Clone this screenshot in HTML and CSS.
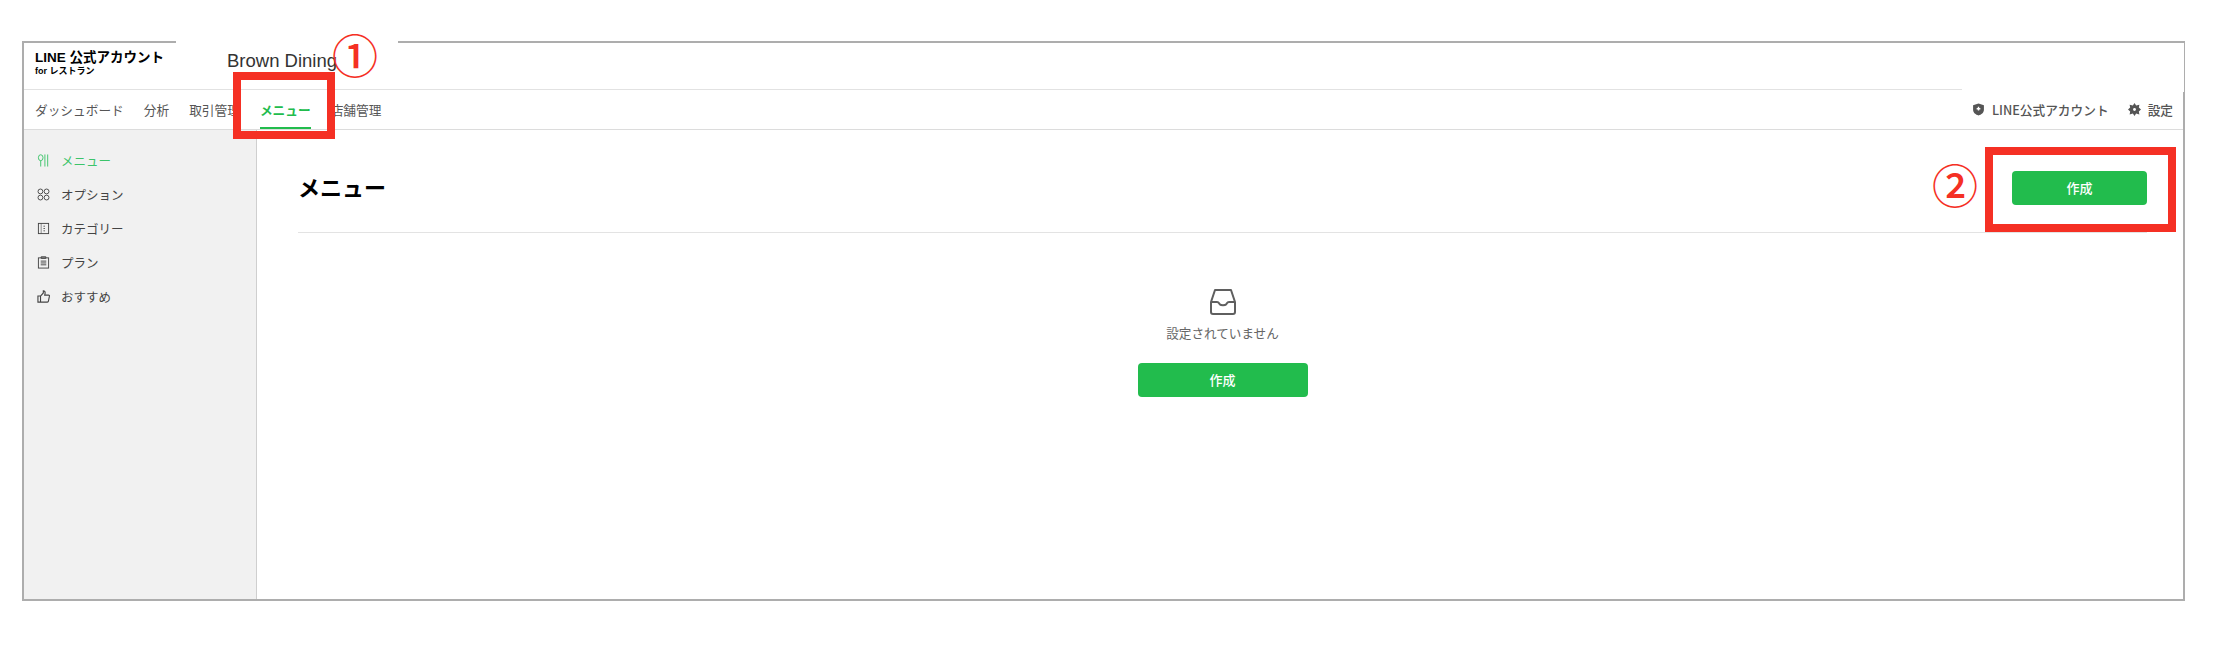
FILE: index.html
```html
<!DOCTYPE html>
<html lang="ja">
<head>
    <meta charset="UTF-8">
    <meta name="viewport" content="width=device-width, initial-scale=1.0">
    <title>メニュー</title>
    <link rel="stylesheet" href="styles.css">
</head>
<body>
    <div class="frame">
        <header class="top">
            <div class="logo">
                <div class="logo-main">LINE 公式アカウント</div>
                <div class="logo-sub">for レストラン</div>
            </div>
        </header>
        <div class="top-line"></div>
        <nav class="nav">
            <a class="nav-item">ダッシュボード</a>
            <a class="nav-item">分析</a>
            <a class="nav-item">取引管理</a>
            <a class="nav-item active">メニュー</a>
            <a class="nav-item">店舗管理</a>
            <div class="nav-right">
                <a class="nav-link">
                    <svg class="nav-icon" viewBox="0 0 12 12"><path d="M6 .5 11 2v4.200c0 2.800-2.400 4.500-5 5.300C3.400 10.700 1 9 1 6.200V2z" fill="#555"/><path d="M6 3.500v3.500M4.300 5.300h3.400" stroke="#fff" stroke-width="1.300"/></svg>
                    LINE公式アカウント
                </a>
                <a class="nav-link">
                    <svg class="nav-icon" viewBox="0 0 12 12"><path d="M6 0l1.500 2.200L10.500 1.500 10 4.200 12 6 10 7.800l.5 2.700-3-.7L6 12l-1.500-2.200-3 .7L2 7.800 0 6l2-1.800-.5-2.700 3 .7z" fill="#555"/><circle cx="6" cy="6" r="1.300" fill="#fff"/></svg>
                    設定
                </a>
            </div>
        </nav>
        <div class="content">
            <aside class="sidebar">
                <a class="side-item active">
                    <svg class="side-icon" viewBox="0 0 14 14" fill="none" stroke="currentColor"><ellipse cx="4" cy="4" rx="2.500" ry="3.200"/><path d="M4 7.200V13.500M8.500.5v13M11.500.5v13"/></svg>
                    メニュー
                </a>
                <a class="side-item">
                    <svg class="side-icon" viewBox="0 0 14 14" fill="none" stroke="currentColor"><circle cx="3.700" cy="3.700" r="2.600"/><circle cx="10.300" cy="3.700" r="2.600"/><circle cx="3.700" cy="10.300" r="2.600"/><circle cx="10.300" cy="10.300" r="2.600"/></svg>
                    オプション
                </a>
                <a class="side-item">
                    <svg class="side-icon" viewBox="0 0 14 14" fill="none" stroke="currentColor"><rect x="1.500" y="1.500" width="11" height="11"/><path d="M4.500 1.500v11" stroke-width=".6"/><path d="M7 4.500h1.500M7 7h1.500M7 9.500h1.500"/></svg>
                    カテゴリー
                </a>
                <a class="side-item">
                    <svg class="side-icon" viewBox="0 0 14 14" fill="none" stroke="currentColor"><rect x="1.500" y="2" width="11" height="11"/><path d="M4.500 .8h5v1.800h-5zM4 5.500h6M4 7.500h6M4 9.500h6"/></svg>
                    プラン
                </a>
                <a class="side-item">
                    <svg class="side-icon" viewBox="0 0 14 14" fill="none" stroke="currentColor" stroke-width="1.200"><path d="M1 6.500h2.800v6.500H1zM3.800 6.500 6.800 3.200V1c1.300 0 2 1 2 2.200L8.300 5.500h4.200c.6 0 1 .5.900 1.100L12.300 12c-.1.600-.5 1-1.100 1H3.800"/></svg>
                    おすすめ
                </a>
            </aside>
            <main class="main">
                <div class="page-head">
                    <h1 class="page-title">メニュー</h1>
                    <button class="btn btn-head">作成</button>
                </div>
                <div class="empty">
                    <svg class="empty-icon" viewBox="0 0 28 28" fill="none" stroke="#5f5f5f" stroke-width="2" stroke-linejoin="round"><path d="M6 2h16l4 12v10a2 2 0 0 1-2 2H4a2 2 0 0 1-2-2V14z"/><path d="M2 14h6c2 0 2 1.500 3 2.500 1 1 5 1 6 0 1-1 1-2.500 3-2.500h6"/></svg>
                    <p class="empty-text">設定されていません</p>
                    <button class="btn btn-empty">作成</button>
                </div>
            </main>
        </div>
    </div>

    <div class="top-patch"></div>
    <div class="side-patch"></div>
    <div class="shop-name">Brown Dining</div>
    <div class="mark mark-1"></div>
    <div class="mark mark-2"></div>
    <div class="num num-1">①</div>
    <div class="num num-2">②</div>
</body>
</html>
```

FILE: styles.css
```css
body {
    margin: 0;
    background-color: #fff;
    font-family: "Noto Sans CJK JP", "Noto Sans", sans-serif;
    color: #444;
}
.frame {
    display: flex;
    flex-direction: column;
    box-sizing: border-box;
    width: 2163px;
    height: 560px;
    margin: 41px 0 0 22px;
    border: 2px solid #adadad;
}
.top {
    height: 46px;
    padding: 7px 0 0 11px;
    box-sizing: border-box;
}
.logo {
    color: #000;
    font-weight: 700;
}
.logo-main {
    font-family: "Liberation Sans", "Noto Sans CJK JP", sans-serif;
    font-size: 13.500px;
    line-height: 16px;
}
.logo-sub {
    font-family: "Liberation Sans", "Noto Sans CJK JP", sans-serif;
    font-size: 9px;
    line-height: 11px;
}
.top-line {
    height: 1px;
    margin-right: 221px;
    background-color: #e2e2e2;
}
.nav {
    display: flex;
    height: 40px;
    box-sizing: border-box;
    padding-left: 11px;
    border-bottom: 1px solid #dcdcdc;
    font-size: 12.700px;
}
.nav-item {
    display: flex;
    align-items: center;
    margin-right: 20px;
    color: #555;
}
.nav-item.active {
    color: #22bc4d;
    font-weight: 700;
    box-shadow: inset 0 -2px 0 #22bc4d;
}
.nav-right {
    display: flex;
    margin-left: auto;
    padding-right: 10px;
    gap: 19px;
}
.nav-link {
    display: flex;
    align-items: center;
    gap: 7px;
    color: #555;
    font-weight: 500;
}
.nav-icon {
    width: 13px;
    height: 13px;
}
.content {
    display: flex;
    flex: 1;
}
.sidebar {
    box-sizing: border-box;
    width: 233px;
    padding-top: 13px;
    background-color: #f1f1f1;
    border-right: 1px solid #cfcfcf;
}
.side-item {
    display: flex;
    align-items: center;
    height: 34px;
    padding-left: 13px;
    gap: 11px;
    font-size: 12.500px;
    color: #444;
}
.side-item.active {
    color: #3cc46a;
}
.side-icon {
    width: 13px;
    height: 13px;
}
.main {
    flex: 1;
    padding: 41px 36px 0 41px;
}
.page-head {
    display: flex;
    align-items: center;
    justify-content: space-between;
    padding-bottom: 27px;
    border-bottom: 1px solid #e3e3e3;
}
.page-title {
    margin: 0 0 4px;
    font-size: 22px;
    line-height: 30px;
    font-weight: 700;
    color: #000;
}
.btn {
    height: 34px;
    padding: 0 0 2px;
    border: none;
    border-radius: 4px;
    background-color: #22bc4d;
    color: #fff;
    font-family: inherit;
    font-size: 13px;
    font-weight: 500;
}
.btn-head {
    width: 135px;
}
.btn-empty {
    width: 170px;
}
.empty {
    display: flex;
    flex-direction: column;
    align-items: center;
    padding-top: 55px;
}
.empty-icon {
    width: 28px;
    height: 28px;
}
.empty-text {
    margin: 8px 0 21px;
    font-size: 12.600px;
    line-height: 18px;
    color: #666;
}

/* annotations drawn on top of the screenshot */
.top-patch {
    position: absolute;
    left: 176px;
    top: 41px;
    width: 222px;
    height: 2px;
    background-color: #fff;
}
.side-patch {
    position: absolute;
    left: 2183px;
    top: 43px;
    width: 1px;
    height: 49px;
    background-color: #fff;
}
.shop-name {
    position: absolute;
    left: 227px;
    top: 50px;
    font-family: "Liberation Sans", sans-serif;
    font-size: 18.500px;
    line-height: 22px;
    color: #333;
}
.mark {
    position: absolute;
    box-sizing: border-box;
    border: 8px solid #f53024;
}
.mark-1 {
    left: 233px;
    top: 72px;
    width: 102px;
    height: 67px;
}
.mark-2 {
    left: 1985px;
    top: 147px;
    width: 191px;
    height: 85px;
}
.num {
    position: absolute;
    font-size: 46px;
    line-height: 46px;
    font-weight: 500;
    color: #f53024;
}
.num-1 {
    left: 332px;
    top: 30px;
}
.num-2 {
    left: 1932px;
    top: 160px;
}
```
